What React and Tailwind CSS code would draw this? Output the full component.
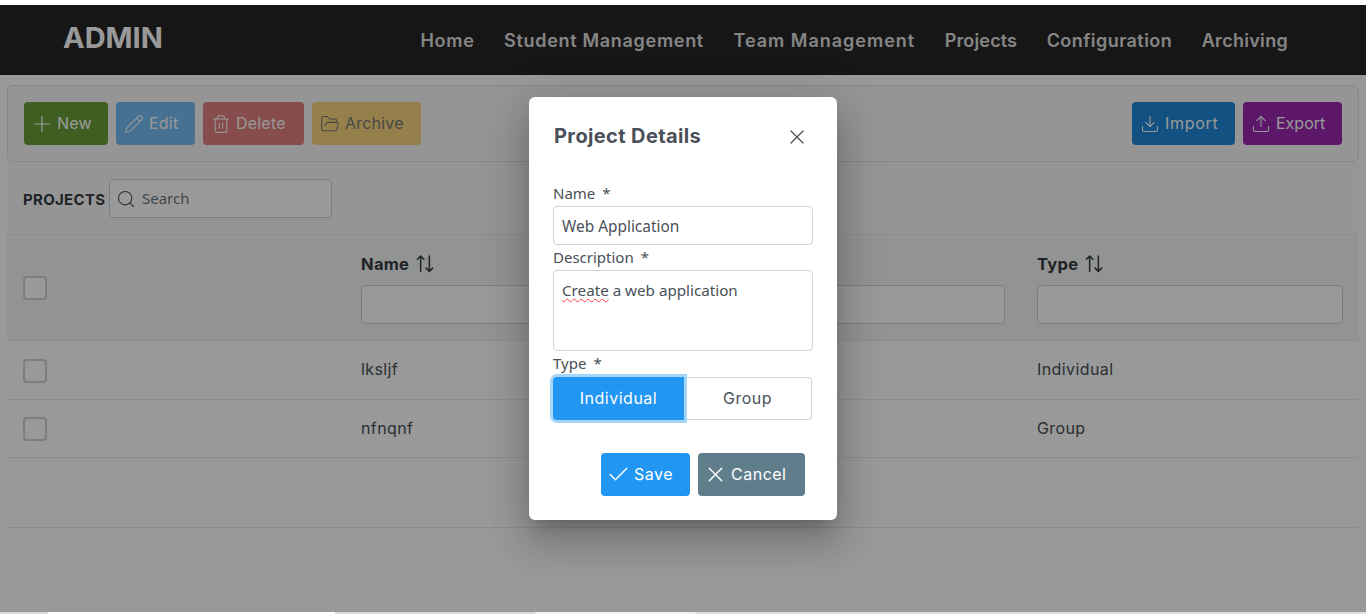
import React from "react";
import { Plus, Pencil, Trash2, FolderOpen, Download, Upload, Search, X, Check } from "lucide-react";

const pop = "font-['Inter','Liberation_Sans',sans-serif]";
const noto = "font-['Noto_Sans','Open_Sans',sans-serif]";

function SortIcon() {
  return (
    <svg width="18" height="20" viewBox="1 1 15.5 16.5" fill="none" stroke="currentColor" strokeWidth="1.3" className="text-[#343a40]">
      <path d="M5 16V2.5M1.8 5.6 5 2.4l3.2 3.2" />
      <path d="M12.5 2v13.5M9.3 12.4l3.2 3.2 3.2-3.2" />
    </svg>
  );
}

function ToolBtn({ icon: Icon, label, size = 20, sw = 1.3, track = "tracking-[0.2px]", className }) {
  return (
    <button className={`h-[43px] rounded-[4px] flex items-center pl-[9px] gap-[7px] text-white text-[16px] ${className}`}>
      <span className="w-[17px] flex justify-center">
        <Icon size={size} strokeWidth={sw} className="shrink-0" />
      </span>
      <span className={`pb-[2px] ${track}`}>{label}</span>
    </button>
  );
}

function Check24() {
  return <div className="w-[24px] h-[24px] rounded-[4px] border-2 border-[#ced4da] bg-white" />;
}

function Row({ name, type, h, checkClass = "" }) {
  return (
    <div className={`grid grid-cols-4 border-b border-[#e9ecef] items-center text-[16px] text-[#495057] tracking-[0.4px] ${h}`}>
      <div className={`pl-[16px] ${checkClass}`}><Check24 /></div>
      <div className="pl-[16px] -mt-[2px]">{name}</div>
      <div />
      <div className="pl-[16px] -mt-[2px]">{type}</div>
    </div>
  );
}

function Field({ label }) {
  return (
    <label className={`block text-[15px] leading-[20px] text-[#495057] ${noto}`}>
      {label}<span className="ml-[7px]">*</span>
    </label>
  );
}

export default function App() {
  return (
    <div className={`relative h-[614px] overflow-hidden bg-white flex flex-col ${pop}`}>
      <div className="h-[5px] shrink-0" />
      <header className="h-[70px] shrink-0 bg-[#262626] flex items-center pl-[63px] pr-[78px]">
        <div className="text-white font-bold text-[29px] -mt-[4px]">ADMIN</div>
        <nav className="ml-auto flex gap-[29.5px] text-white text-[18px] font-semibold opacity-85 mt-[1px]">
          <span className="tracking-[0.7px]">Home</span>
          <span className="tracking-[0.7px]">Student Management</span>
          <span className="tracking-[1px]">Team Management</span>
          <span className="tracking-[0.15px]">Projects</span>
          <span className="tracking-[0.45px]">Configuration</span>
          <span className="tracking-[0.3px]">Archiving</span>
        </nav>
      </header>

      <main className="flex-1 px-[7px] pt-[10px]">
        <div className="h-[77px] border border-[#dee2e6] rounded-[6px] bg-[#f8f9fa] flex items-center px-[16px]">
          <div className="flex gap-[8px]">
            <ToolBtn icon={Plus} label="New" size={26} sw={1.15} className="w-[84px] bg-[#689f38]" />
            <ToolBtn icon={Pencil} label="Edit" className="w-[79px] bg-[#2196f3] opacity-60" />
            <ToolBtn icon={Trash2} label="Delete" className="w-[101px] bg-[#d32f2f] opacity-60" />
            <ToolBtn icon={FolderOpen} label="Archive" className="w-[109px] bg-[#fbc02d] opacity-60 !text-[#212529]" />
          </div>
          <div className="ml-auto flex gap-[8px]">
            <ToolBtn icon={Download} label="Import" track="tracking-[0.7px]" className="w-[103px] bg-[#1e88d8]" />
            <ToolBtn icon={Upload} label="Export" track="tracking-[0px]" className="w-[99px] bg-[#9c27b0]" />
          </div>
        </div>

        <div className="bg-[#f8f9fa] h-[73px] border-b border-[#e9ecef] flex items-center pl-[16px] pt-[1px]">
          <span className="font-bold text-[15px] tracking-[0.3px] text-[#343a40] w-[86px] mt-[3px]">PROJECTS</span>
          <div className={`w-[223px] h-[39px] rounded-[4px] border border-[#ced4da] bg-white flex items-center pl-[6px] gap-[6px] text-[15px] text-[#6c757d] ${noto}`}>
            <Search size={20} strokeWidth={1.3} className="text-[#495057]" />
            <span>Search</span>
          </div>
        </div>

        <div className="grid grid-cols-4 h-[106px] bg-[#f4f5f6] border-b border-[#e9ecef]">
          <div className="pl-[16px] flex items-center"><Check24 /></div>
          {["Name", "Description", "Type"].map((t) => (
            <div key={t} className="px-[16px] pt-[19px]">
              <div className="flex items-center gap-[7px] h-[20px] font-bold text-[16.5px] tracking-[0.3px] text-[#343a40]">
                {t}<SortIcon />
              </div>
              <div className="h-[39px] mt-[11px] rounded-[4px] border border-[#ced4da] bg-white" />
            </div>
          ))}
        </div>
        <Row name="lksljf" type="Individual" h="h-[59px]" checkClass="mt-[2px]" />
        <Row name="nfnqnf" type="Group" h="h-[58px]" />
        <div className="h-[70px] border-b border-[#e9ecef]" />
      </main>

      <div className="h-[2px] shrink-0 flex">
        <div className="w-[48px] bg-[#d5dfdf]" />
        <div className="w-[287px] bg-white" />
        <div className="w-[200px] bg-[#d8dad9]" />
        <div className="w-[160px] bg-[#f1f1f1]" />
        <div className="flex-1 bg-[#dbe3e2]" />
      </div>

      <div className="absolute left-0 right-0 top-[5px] bottom-[2px] bg-black/40 flex justify-center pt-[92px]">
        <div className="w-[308px] h-[423px] bg-white rounded-[6px] px-[24px] shadow-[0_11px_15px_-7px_rgba(0,0,0,0.2),0_24px_38px_3px_rgba(0,0,0,0.14),0_9px_46px_8px_rgba(0,0,0,0.12)]">
          <div className="flex items-center h-[78px] pl-[1px]">
            <h2 className="text-[20px] font-bold text-[#495057] tracking-[0.38px]">Project Details</h2>
            <X size={24} strokeWidth={1.3} className="ml-auto mr-[4px] mt-[1px] text-[#495057]" />
          </div>
          <div className="mt-[8px]"><Field label="Name" /></div>
          <div className={`mt-[3px] h-[39px] w-[260px] rounded-[4px] border border-[#ced4da] flex items-center pl-[8px] pt-[2px] text-[15.4px] text-[#495057] ${noto}`}>Web Application</div>
          <div className="mt-[2px]"><Field label="Description" /></div>
          <div className={`mt-[3px] h-[81px] w-[260px] rounded-[4px] border border-[#ced4da] pl-[8px] pt-[7px] text-[15.2px] leading-[24px] text-[#495057] ${noto}`}>
            <span className="underline decoration-wavy decoration-[#ff3b3b] decoration-1 underline-offset-2">Create</span> a web application
          </div>
          <div className="mt-[2px]"><Field label="Type" /></div>
          <div className="mt-[4px] flex w-[259px] text-[16px] tracking-[0.5px]">
            <button className="relative z-10 w-[131px] h-[43px] pb-[2px] rounded-l-[4px] bg-[#2196f3] text-white ring-[3px] ring-[#a6d5fa]">Individual</button>
            <button className="flex-1 h-[43px] pb-[2px] rounded-r-[4px] border border-l-0 border-[#ced4da] text-[#495057]">Group</button>
          </div>
          <div className="mt-[33px] flex justify-end gap-[8px] pr-[8px] text-[16px] tracking-[0.5px] text-white">
            <button className="w-[89px] h-[43px] rounded-[4px] bg-[#2196f3] flex items-center pl-[8px] gap-[7px]">
              <span className="w-[18px] flex justify-center"><Check size={25} strokeWidth={1.4} className="shrink-0" /></span><span className="pb-[2px]">Save</span>
            </button>
            <button className="w-[107px] h-[43px] rounded-[4px] bg-[#607d8b] flex items-center pl-[8px] gap-[7px]">
              <span className="w-[18px] flex justify-center"><X size={25} strokeWidth={1.4} className="shrink-0" /></span><span className="pb-[2px]">Cancel</span>
            </button>
          </div>
        </div>
      </div>
    </div>
  );
}
